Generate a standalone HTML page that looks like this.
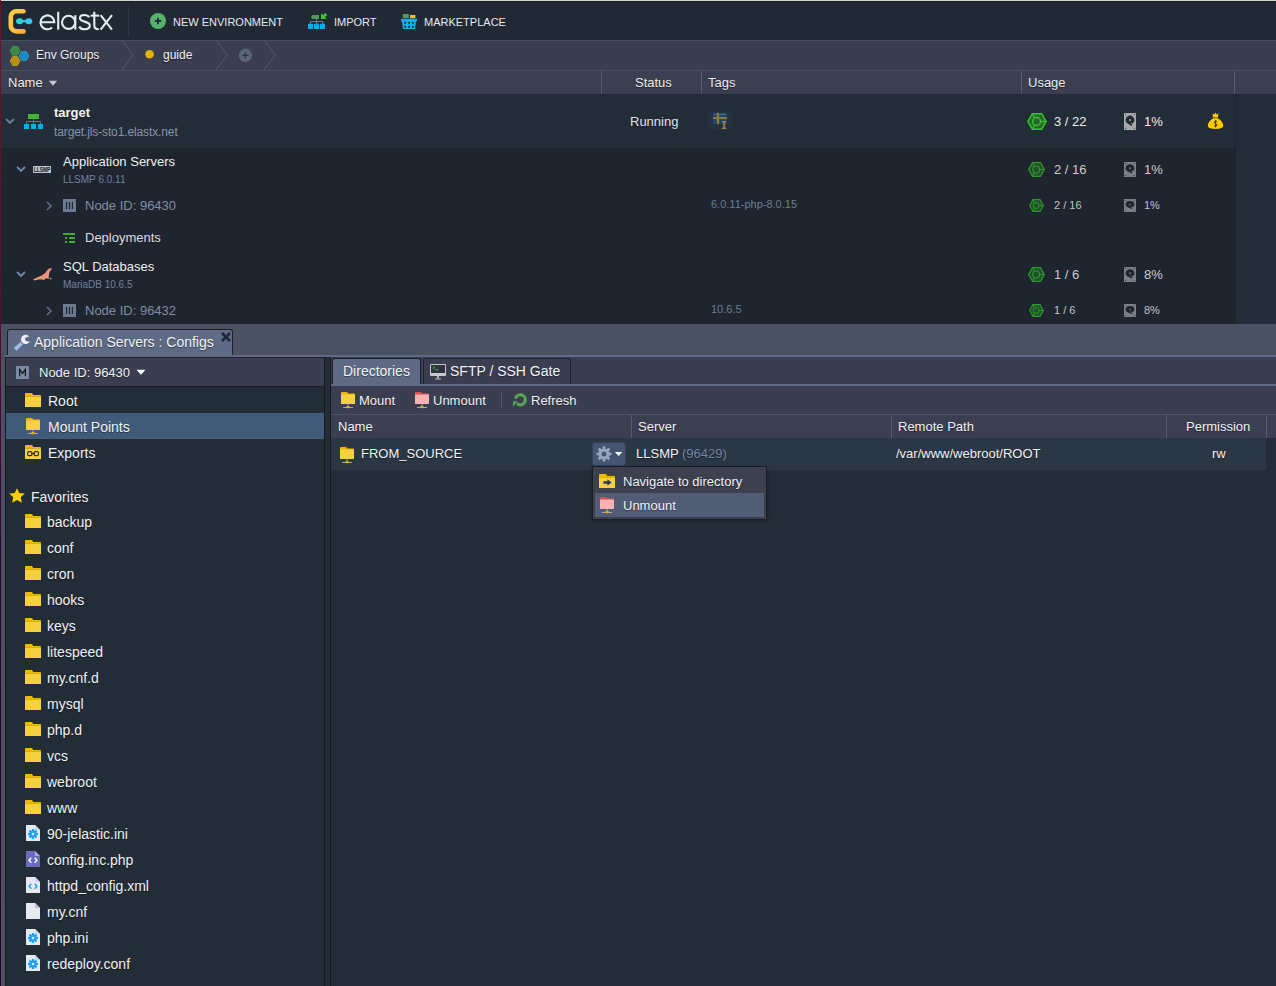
<!DOCTYPE html>
<html><head><meta charset="utf-8">
<style>
*{box-sizing:border-box;margin:0;padding:0}
html,body{width:1276px;height:986px;overflow:hidden;background:#232c37;font-family:"Liberation Sans",sans-serif;color:#e6e8ec}
.a{position:absolute}
.t{position:absolute;white-space:nowrap;line-height:1}
svg{position:absolute;overflow:visible}
</style></head><body>
<!-- window edges -->
<div class="a" style="left:0;top:0;width:1276px;height:1px;background:#d9d7d5;z-index:10"></div>
<div class="a" style="left:0;top:0;width:1px;height:986px;background:linear-gradient(#6b1525 0%,#5a1030 30%,#3a0035 50%,#1e0018 100%);z-index:10"></div>

<!-- top bar -->
<div class="a" style="left:0;top:1px;width:1276px;height:39px;background:#202934"></div>
<div class="a" style="left:0;top:1px;width:1276px;height:1px;background:#18202a"></div>


<!-- logo -->
<svg style="left:0;top:0" width="130" height="40">
 <defs><linearGradient id="lg" x1="0" y1="0" x2="1" y2="1"><stop offset="0" stop-color="#ffcf3a"/><stop offset="0.5" stop-color="#ffc04a"/><stop offset="1" stop-color="#f9b233"/></linearGradient></defs>
 <path d="M23.5 11.3 H16.5 A5.7 5.7 0 0 0 10.8 17 V25.7 A5.7 5.7 0 0 0 16.5 31.4 H23.5" fill="none" stroke="url(#lg)" stroke-width="4.6" stroke-linecap="round"/>
 <ellipse cx="19.6" cy="21.2" rx="3.5" ry="3" fill="#2fd4d2"/>
 <ellipse cx="28.8" cy="21.2" rx="3.5" ry="3" fill="#3ac6ee"/>
 <rect x="19.5" y="20.1" width="9" height="2.2" fill="#34cde0"/>
 <g fill="none" stroke="#e4ecf3" stroke-width="2.1">
  <path d="M40.5 22.3 H54.3 A6.9 6.9 0 1 0 52.1 27.4"/>
  <path d="M58.2 11.8 V29.6"/>
  <circle cx="68.6" cy="22.3" r="6.6"/>
  <path d="M75.3 15.2 V29.6"/>
  <path d="M89.2 17.2 C88 15.3 85.8 15 84.3 15 C81.5 15 79.9 16.4 79.9 18.3 C79.9 22.6 89.8 20.6 89.8 25.6 C89.8 27.9 87.8 29.3 84.6 29.3 C82.2 29.3 80.2 28.3 79.2 26.6"/>
  <path d="M94.3 11.8 V25.5 C94.3 28.3 95.5 29.3 98.8 29.3"/>
  <path d="M90.6 15.6 H99.2"/>
  <path d="M100.6 15.2 L112 29.6 M112 15.2 L100.6 29.6"/>
 </g>
</svg>
<div class="a" style="left:128px;top:6px;width:1px;height:30px;background:#2e3743"></div>

<!-- new env -->
<svg style="left:150px;top:13px" width="16" height="16"><circle cx="8" cy="8" r="8" fill="#58b26a"/><path d="M8 4.8V11.2M4.8 8H11.2" stroke="#243040" stroke-width="1.9"/></svg>
<div class="t" style="left:173px;top:17px;font-size:11px;color:#e8eaed">NEW ENVIRONMENT</div>

<!-- import -->
<svg style="left:300px;top:8px" width="40" height="26">
 <path d="M12.3 7 H19 V11 H12.3 L11 9 Z" fill="#4f9a5c"/>
 <path d="M21 5 L21 11 L27 11 L25 9.3 L27.2 7 L25.3 4.8 L23 7.2 Z" fill="#3cc43a"/>
 <path d="M16.5 11 V16 M10.5 16 V13.5 H22.7 V16" fill="none" stroke="#6f7382" stroke-width="1.2"/>
 <rect x="8" y="15.8" width="5" height="5.2" fill="#00aeef"/>
 <rect x="14" y="15.8" width="5" height="5.2" fill="#00aeef"/>
 <rect x="20" y="15.8" width="5" height="5.2" fill="#00aeef"/>
</svg>
<div class="t" style="left:334px;top:17px;font-size:11px;color:#e8eaed">IMPORT</div>

<!-- marketplace -->
<svg style="left:393px;top:8px" width="40" height="26">
 <rect x="9.7" y="6" width="6.1" height="4" fill="#4f9a5c"/>
 <rect x="17" y="7" width="5.4" height="3.2" fill="#f5c518"/>
 <path d="M8 10.8 H24 V13.5 H23 L22 21 H10 L9 13.5 H8 Z" fill="#00b4f0"/>
 <g fill="#1e2833"><rect x="11.3" y="13.9" width="1.8" height="1.8"/><rect x="15.1" y="13.9" width="1.8" height="1.8"/><rect x="18.9" y="13.9" width="1.8" height="1.8"/><rect x="11.3" y="17.9" width="1.8" height="1.8"/><rect x="15.1" y="17.9" width="1.8" height="1.8"/><rect x="18.9" y="17.9" width="1.8" height="1.8"/></g>
</svg>
<div class="t" style="left:424px;top:17px;font-size:11px;color:#e8eaed">MARKETPLACE</div>

<!-- breadcrumb bar -->
<div class="a" style="left:0;top:40px;width:1276px;height:31px;background:#3b3e50;border-top:1px solid #4b4e60;border-bottom:1px solid #4b4e60"></div>

<!-- grid header -->
<div class="a" style="left:0;top:71px;width:1276px;height:23px;background:#3c3f51"></div>


<!-- breadcrumb content -->
<svg style="left:0;top:40px" width="300" height="31">
 <path d="M12.7 6.4 H17.5 L20 10.8 L17.5 15.2 H12.7 L10.2 10.8 Z" fill="#3a8a45" stroke="#46a852" stroke-width="0.7"/>
 <path d="M21.6 11.6 H26.4 L28.9 16 L26.4 20.4 H21.6 L19.1 16 Z" fill="#1b8bbd" stroke="#2aa6dc" stroke-width="0.7"/>
 <path d="M12.7 16.6 H17.5 L20 21 L17.5 25.4 H12.7 L10.2 21 Z" fill="#b38f10" stroke="#dcae1c" stroke-width="0.7"/>
 <path d="M122 0 L133 15 L122 30" fill="none" stroke="#55586b" stroke-width="1"/>
 <circle cx="149.6" cy="14.3" r="4.3" fill="#e2b400"/>
 <path d="M216 0 L227.2 15 L216 30" fill="none" stroke="#55586b" stroke-width="1"/>
 <circle cx="245.4" cy="15.4" r="6.6" fill="#5c6578"/>
 <path d="M245.4 12.3 V18.5 M242.3 15.4 H248.5" stroke="#2b313d" stroke-width="1.1"/>
 <path d="M264 0 L275.2 15 L264 30" fill="none" stroke="#55586b" stroke-width="1"/>
</svg>
<div class="t" style="left:36px;top:49px;font-size:12px;color:#f2f2f2;text-shadow:0 1px 1px rgba(0,0,0,.6)">Env Groups</div>
<div class="t" style="left:163px;top:49px;font-size:12px;color:#f2f2f2;text-shadow:0 1px 1px rgba(0,0,0,.6)">guide</div>

<!-- header content -->
<div class="t" style="left:8px;top:76px;font-size:13px;color:#ececee;text-shadow:0 1px 1px rgba(0,0,0,.5)">Name</div>
<svg style="left:48px;top:80px" width="10" height="6"><path d="M0.8 0.8 H9.2 L5 5.8 Z" fill="#c8c8cc"/></svg>
<div class="a" style="left:601px;top:71px;width:1px;height:23px;background:#565a6b"></div>
<div class="t" style="left:635px;top:76px;font-size:13px;color:#ececee;text-shadow:0 1px 1px rgba(0,0,0,.5)">Status</div>
<div class="a" style="left:701px;top:71px;width:1px;height:23px;background:#565a6b"></div>
<div class="t" style="left:708px;top:76px;font-size:13px;color:#ececee;text-shadow:0 1px 1px rgba(0,0,0,.5)">Tags</div>
<div class="a" style="left:1021px;top:71px;width:1px;height:23px;background:#565a6b"></div>
<div class="t" style="left:1028px;top:76px;font-size:13px;color:#ececee;text-shadow:0 1px 1px rgba(0,0,0,.5)">Usage</div>
<div class="a" style="left:1234px;top:71px;width:1px;height:23px;background:#565a6b"></div>

<!-- grid rows -->
<div class="a" style="left:0;top:94px;width:1235px;height:54px;background:#232d38"></div>
<div class="a" style="left:0;top:148px;width:1235px;height:176px;background:#1f252e"></div>
<div class="a" style="left:1236px;top:94px;width:40px;height:230px;background:#232c38"></div>

<!-- grid content -->
<svg style="left:5px;top:118px" width="10" height="7"><path d="M1 1 L5 5 L9 1" fill="none" stroke="#6d7f98" stroke-width="1.9"/></svg>
<svg style="left:23px;top:113px" width="22" height="18"><rect x="5" y="1" width="11" height="5" fill="#44b33a"/><path d="M10.5 6 V11 M3.5 11 V8.5 H17.5 V11" fill="none" stroke="#6c707c" stroke-width="1"/><rect x="1" y="11" width="5" height="5" fill="#00aeef"/><rect x="8" y="11" width="5" height="5" fill="#00aeef"/><rect x="15" y="11" width="5" height="5" fill="#00aeef"/></svg>
<div class="t" style="left:54px;top:106.0px;font-size:13px;color:#f4f4f4;font-weight:bold;text-shadow:0 1px 1px rgba(0,0,0,.4)">target</div>
<div class="t" style="left:54px;top:125.8px;font-size:12px;color:#8794a9;letter-spacing:-0.12px">target.jls-sto1.elastx.net</div>
<div class="t" style="left:630px;top:115.0px;font-size:13px;color:#e4e4e4;text-shadow:0 1px 1px rgba(0,0,0,.4)">Running</div>
<div class="a" style="left:708px;top:112px;width:24px;height:18px;background:#28313e;border-radius:2px"></div>
<svg style="left:708px;top:112px" width="24" height="18"><rect x="4.9" y="0.8" width="14.2" height="11.2" fill="#1e4574"/><rect x="6" y="2" width="12" height="1" fill="#50698a"/><rect x="8.9" y="0.8" width="2.2" height="11.2" fill="#8f7f32"/><rect x="4.9" y="5.1" width="14.2" height="1.8" fill="#8f7f32"/><path d="M14 9 H18 V10.2 H17.2 V15.8 H18 V17 H14 V15.8 H15.3 V10.2 H14 Z" fill="#9a8a38"/></svg>
<svg style="left:1027px;top:113px" width="20" height="17" viewBox="0 0 20 17" preserveAspectRatio="none"><path d="M5.3 0.8 H14.7 L19.2 8.5 L14.7 16.2 H5.3 L0.8 8.5 Z" fill="#2a6530" stroke="#33c42e" stroke-width="1.4"/><circle cx="9.6" cy="8.5" r="4" fill="none" stroke="#33c42e" stroke-width="1.3"/><path d="M13.6 8.5 H19 M7.6 5 L5.4 1 M7.6 12 L5.4 16" stroke="#33c42e" stroke-width="1.3"/></svg>
<div class="t" style="left:1054px;top:115.0px;font-size:13px;color:#eeeeee;">3 / 22</div>
<svg style="left:1124px;top:113px" width="12" height="17" viewBox="0 0 12 17" preserveAspectRatio="none"><rect x="0" y="0" width="12" height="17" fill="#a9a9a9"/><circle cx="6" cy="7" r="4.4" fill="#222b36"/><circle cx="6" cy="7" r="0.95" fill="#a9a9a9"/><path d="M4.6 10.2 L7.6 12.2" stroke="#222b36" stroke-width="1.5" stroke-linecap="round"/><path d="M6.6 9.6 L8.2 11" stroke="#a9a9a9" stroke-width="0.6"/><g fill="#222b36" opacity="0.8"><circle cx="1.6" cy="1.6" r="0.6"/><circle cx="10.4" cy="1.6" r="0.6"/><circle cx="1.6" cy="15.4" r="0.6"/><circle cx="10.4" cy="15.4" r="0.6"/></g></svg>
<div class="t" style="left:1144px;top:115.0px;font-size:13px;color:#eeeeee;">1%</div>
<svg style="left:1207px;top:111px" width="18" height="19"><path d="M5.6 2.6 L7.4 3.6 L8.5 1.4 L9.6 3.6 L11.4 2.6 L11.1 6.6 H5.9 Z" fill="#ffcc00"/><path d="M6.4 7.3 H10.6 C14.2 9 16.2 12.2 16.2 14.6 C16.2 17 13.5 18 8.5 18 C3.5 18 0.8 17 0.8 14.6 C0.8 12.2 2.8 9 6.4 7.3 Z" fill="#ffcc00"/><path d="M10.2 10.6 C9.6 9.9 7.2 9.9 7.2 11.3 C7.2 12.8 10.1 12.4 10.1 14.1 C10.1 15.5 7.6 15.6 6.9 14.7 M8.6 9.2 V16.4" fill="none" stroke="#2b2a1c" stroke-width="0.95"/></svg>
<div class="a" style="left:0;top:188px;width:1235px;height:1px;background:#1c2128"></div>
<div class="a" style="left:0;top:221px;width:1235px;height:1px;background:#1c2128"></div>
<div class="a" style="left:0;top:253px;width:1235px;height:1px;background:#1c2128"></div>
<div class="a" style="left:0;top:293px;width:1235px;height:1px;background:#1c2128"></div>
<svg style="left:16px;top:166px" width="10" height="7"><path d="M1 1 L5 5 L9 1" fill="none" stroke="#7088a8" stroke-width="1.9"/></svg>
<svg style="left:33px;top:166px" width="19" height="8"><rect width="18" height="7" fill="#bfc3cb"/><text x="9" y="6.3" font-size="7.5" font-weight="bold" text-anchor="middle" fill="#14171c" font-family="Liberation Sans" textLength="16.5" lengthAdjust="spacingAndGlyphs">LLSMP</text></svg>
<div class="t" style="left:63px;top:155.0px;font-size:13px;color:#f0f0f0;">Application Servers</div>
<div class="t" style="left:63px;top:174.5px;font-size:10px;color:#6f82a0;">LLSMP 6.0.11</div>
<svg style="left:1028px;top:162px" width="17" height="15" viewBox="0 0 20 17" preserveAspectRatio="none"><path d="M5.3 0.8 H14.7 L19.2 8.5 L14.7 16.2 H5.3 L0.8 8.5 Z" fill="#244f2c" stroke="#2a9a2a" stroke-width="1.4"/><circle cx="9.6" cy="8.5" r="4" fill="none" stroke="#2a9a2a" stroke-width="1.3"/><path d="M13.6 8.5 H19 M7.6 5 L5.4 1 M7.6 12 L5.4 16" stroke="#2a9a2a" stroke-width="1.3"/></svg>
<div class="t" style="left:1054px;top:163.0px;font-size:13px;color:#cccccc;">2 / 16</div>
<svg style="left:1124px;top:162px" width="12" height="15" viewBox="0 0 12 17" preserveAspectRatio="none"><rect x="0" y="0" width="12" height="17" fill="#7c7f85"/><circle cx="6" cy="7" r="4.4" fill="#1f252e"/><circle cx="6" cy="7" r="0.95" fill="#7c7f85"/><path d="M4.6 10.2 L7.6 12.2" stroke="#1f252e" stroke-width="1.5" stroke-linecap="round"/><path d="M6.6 9.6 L8.2 11" stroke="#7c7f85" stroke-width="0.6"/><g fill="#1f252e" opacity="0.8"><circle cx="1.6" cy="1.6" r="0.6"/><circle cx="10.4" cy="1.6" r="0.6"/><circle cx="1.6" cy="15.4" r="0.6"/><circle cx="10.4" cy="15.4" r="0.6"/></g></svg>
<div class="t" style="left:1144px;top:163.0px;font-size:13px;color:#cccccc;">1%</div>
<svg style="left:46px;top:201px" width="7" height="10"><path d="M1 1 L5 5 L1 9" fill="none" stroke="#5f6f85" stroke-width="1.7"/></svg>
<svg style="left:63px;top:199px" width="13" height="13"><rect width="13" height="13" fill="#6c7a90"/><path d="M3.6 3 V10 M6.5 3 V10 M9.4 3 V10" stroke="#1f252e" stroke-width="1.2"/></svg>
<div class="t" style="left:85px;top:199.0px;font-size:13px;color:#7f8da4;">Node ID: 96430</div>
<div class="t" style="left:711px;top:198.7px;font-size:11px;color:#6a7d96;">6.0.11-php-8.0.15</div>
<svg style="left:1029px;top:199px" width="15" height="13" viewBox="0 0 20 17" preserveAspectRatio="none"><path d="M5.3 0.8 H14.7 L19.2 8.5 L14.7 16.2 H5.3 L0.8 8.5 Z" fill="#244f2c" stroke="#2a9a2a" stroke-width="1.4"/><circle cx="9.6" cy="8.5" r="4" fill="none" stroke="#2a9a2a" stroke-width="1.3"/><path d="M13.6 8.5 H19 M7.6 5 L5.4 1 M7.6 12 L5.4 16" stroke="#2a9a2a" stroke-width="1.3"/></svg>
<div class="t" style="left:1054px;top:199.7px;font-size:11px;color:#c4c4c4;">2 / 16</div>
<svg style="left:1124px;top:199px" width="12" height="13" viewBox="0 0 12 17" preserveAspectRatio="none"><rect x="0" y="0" width="12" height="17" fill="#7c7f85"/><circle cx="6" cy="7" r="4.4" fill="#1f252e"/><circle cx="6" cy="7" r="0.95" fill="#7c7f85"/><path d="M4.6 10.2 L7.6 12.2" stroke="#1f252e" stroke-width="1.5" stroke-linecap="round"/><path d="M6.6 9.6 L8.2 11" stroke="#7c7f85" stroke-width="0.6"/><g fill="#1f252e" opacity="0.8"><circle cx="1.6" cy="1.6" r="0.6"/><circle cx="10.4" cy="1.6" r="0.6"/><circle cx="1.6" cy="15.4" r="0.6"/><circle cx="10.4" cy="15.4" r="0.6"/></g></svg>
<div class="t" style="left:1144px;top:199.7px;font-size:11px;color:#c4c4c4;">1%</div>
<svg style="left:63px;top:232px" width="13" height="12"><rect x="0" y="1" width="12" height="2" fill="#3fae2a"/><rect x="2" y="5" width="2" height="2" fill="#3fae2a"/><rect x="6" y="5" width="6" height="2" fill="#3fae2a"/><rect x="2" y="9" width="2" height="2" fill="#3fae2a"/><rect x="6" y="9" width="6" height="2" fill="#3fae2a"/></svg>
<div class="t" style="left:85px;top:231.0px;font-size:13px;color:#dddddd;">Deployments</div>
<svg style="left:16px;top:271px" width="10" height="7"><path d="M1 1 L5 5 L9 1" fill="none" stroke="#7088a8" stroke-width="1.9"/></svg>
<svg style="left:32px;top:267px" width="21" height="15"><path d="M1.1 12.2 C2.5 11.6 4 10.8 6 10 C8.5 9 10.8 8.2 12.6 6.6 C14 5.3 15 3.2 16.4 2.1 C17.4 1.3 18.6 1.2 19.9 1.6 L19.3 2.9 C18.3 3.6 17.6 4.6 17.3 6 C17 7.6 16.8 9.4 16.7 10.6 L17.4 11.6 L15.6 11.8 L14.7 10.9 C13.8 11.6 13.2 12 12.6 12.2 L12 13.6 L11 12.5 C9 12.4 6.5 12.5 4.5 13 C3 13.5 1.8 13.6 1.1 12.2 Z" fill="#e8967a"/><circle cx="18.6" cy="11.6" r="0.9" fill="#e8967a"/></svg>
<div class="t" style="left:63px;top:260.0px;font-size:13px;color:#f0f0f0;">SQL Databases</div>
<div class="t" style="left:63px;top:279.5px;font-size:10px;color:#6f82a0;">MariaDB 10.6.5</div>
<svg style="left:1028px;top:267px" width="17" height="15" viewBox="0 0 20 17" preserveAspectRatio="none"><path d="M5.3 0.8 H14.7 L19.2 8.5 L14.7 16.2 H5.3 L0.8 8.5 Z" fill="#244f2c" stroke="#2a9a2a" stroke-width="1.4"/><circle cx="9.6" cy="8.5" r="4" fill="none" stroke="#2a9a2a" stroke-width="1.3"/><path d="M13.6 8.5 H19 M7.6 5 L5.4 1 M7.6 12 L5.4 16" stroke="#2a9a2a" stroke-width="1.3"/></svg>
<div class="t" style="left:1054px;top:268.0px;font-size:13px;color:#cccccc;">1 / 6</div>
<svg style="left:1124px;top:267px" width="12" height="15" viewBox="0 0 12 17" preserveAspectRatio="none"><rect x="0" y="0" width="12" height="17" fill="#7c7f85"/><circle cx="6" cy="7" r="4.4" fill="#1f252e"/><circle cx="6" cy="7" r="0.95" fill="#7c7f85"/><path d="M4.6 10.2 L7.6 12.2" stroke="#1f252e" stroke-width="1.5" stroke-linecap="round"/><path d="M6.6 9.6 L8.2 11" stroke="#7c7f85" stroke-width="0.6"/><g fill="#1f252e" opacity="0.8"><circle cx="1.6" cy="1.6" r="0.6"/><circle cx="10.4" cy="1.6" r="0.6"/><circle cx="1.6" cy="15.4" r="0.6"/><circle cx="10.4" cy="15.4" r="0.6"/></g></svg>
<div class="t" style="left:1144px;top:268.0px;font-size:13px;color:#cccccc;">8%</div>
<svg style="left:46px;top:306px" width="7" height="10"><path d="M1 1 L5 5 L1 9" fill="none" stroke="#5f6f85" stroke-width="1.7"/></svg>
<svg style="left:63px;top:304px" width="13" height="13"><rect width="13" height="13" fill="#6c7a90"/><path d="M3.6 3 V10 M6.5 3 V10 M9.4 3 V10" stroke="#1f252e" stroke-width="1.2"/></svg>
<div class="t" style="left:85px;top:304.0px;font-size:13px;color:#7f8da4;">Node ID: 96432</div>
<div class="t" style="left:711px;top:303.7px;font-size:11px;color:#6a7d96;">10.6.5</div>
<svg style="left:1029px;top:304px" width="15" height="13" viewBox="0 0 20 17" preserveAspectRatio="none"><path d="M5.3 0.8 H14.7 L19.2 8.5 L14.7 16.2 H5.3 L0.8 8.5 Z" fill="#244f2c" stroke="#2a9a2a" stroke-width="1.4"/><circle cx="9.6" cy="8.5" r="4" fill="none" stroke="#2a9a2a" stroke-width="1.3"/><path d="M13.6 8.5 H19 M7.6 5 L5.4 1 M7.6 12 L5.4 16" stroke="#2a9a2a" stroke-width="1.3"/></svg>
<div class="t" style="left:1054px;top:304.7px;font-size:11px;color:#c4c4c4;">1 / 6</div>
<svg style="left:1124px;top:304px" width="12" height="13" viewBox="0 0 12 17" preserveAspectRatio="none"><rect x="0" y="0" width="12" height="17" fill="#7c7f85"/><circle cx="6" cy="7" r="4.4" fill="#1f252e"/><circle cx="6" cy="7" r="0.95" fill="#7c7f85"/><path d="M4.6 10.2 L7.6 12.2" stroke="#1f252e" stroke-width="1.5" stroke-linecap="round"/><path d="M6.6 9.6 L8.2 11" stroke="#7c7f85" stroke-width="0.6"/><g fill="#1f252e" opacity="0.8"><circle cx="1.6" cy="1.6" r="0.6"/><circle cx="10.4" cy="1.6" r="0.6"/><circle cx="1.6" cy="15.4" r="0.6"/><circle cx="10.4" cy="15.4" r="0.6"/></g></svg>
<div class="t" style="left:1144px;top:304.7px;font-size:11px;color:#c4c4c4;">8%</div>
<div class="a" style="left:1235px;top:94px;width:1px;height:230px;background:#1c232b"></div>

<!-- bottom panel -->
<div class="a" style="left:0;top:324px;width:1276px;height:662px;background:#4a5163"></div>

<div class="a" style="left:1px;top:324px;width:4px;height:662px;background:#4a5163"></div>
<div class="a" style="left:7px;top:329px;width:226px;height:28px;background:#5f6b84;border:1px solid #1c1f26;border-bottom:none;border-radius:3px 3px 0 0"></div>
<div class="a" style="left:5px;top:355px;width:1271px;height:2px;background:#5f6b84"></div>
<svg style="left:10px;top:330px" width="24" height="24"><path d="M5.2 19.4 L11.6 13.3" stroke="#9dbde9" stroke-width="3.6"/><circle cx="15.6" cy="9.4" r="4.6" fill="#eeeeee"/><circle cx="16.9" cy="9.1" r="1.9" fill="#56627a"/><path d="M16.9 7.2 L21 6.4 L21 11.6 L16.9 11" fill="#5f6b84"/><path d="M16.9 7.2 L19.5 6.9 M16.9 11 L19.5 11.3" stroke="#56627a" stroke-width="0.6"/></svg>
<div class="t" style="left:34px;top:335.1px;font-size:14px;color:#f2f4f8;text-shadow:0 1px 1px rgba(0,0,0,.45)">Application Servers : Configs</div>
<svg style="left:221px;top:332px" width="10" height="10"><path d="M1 1 L9 9 M9 1 L1 9" stroke="#1c2838" stroke-width="2.6"/></svg>
<div class="a" style="left:5px;top:357px;width:320px;height:629px;background:#232d37;border-left:1px solid #18191c;border-right:1px solid #18191c;border-top:1px solid #20232b"></div>
<div class="a" style="left:6px;top:358px;width:318px;height:28px;background:#3b3e50"></div>
<div class="a" style="left:6px;top:386px;width:318px;height:1px;background:#1a1c22"></div>
<svg style="left:16px;top:366px" width="13" height="13"><rect width="13" height="13" fill="#7a8ba6"/><path d="M3.6 10.2 V3.4 L6.5 7.4 L9.4 3.4 V10.2" fill="none" stroke="#12161c" stroke-width="1.2"/></svg>
<div class="t" style="left:39px;top:366.0px;font-size:13px;color:#f2f2f2;text-shadow:0 1px 1px rgba(0,0,0,.45)">Node ID: 96430</div>
<svg style="left:136px;top:369px" width="10" height="7"><path d="M0.5 0.7 H9.5 L5 5.8 Z" fill="#ffffff"/></svg>
<div class="a" style="left:6px;top:413px;width:318px;height:26px;background:#405b7a"></div>
<svg style="left:25px;top:393px" width="16" height="15"><path d="M0 0.8 Q0 0 0.8 0 H7 L8.3 2 H15.2 Q16 2 16 2.8 V3.8 H0 Z" fill="#f2b705"/><rect x="0" y="3.6" width="16" height="10.4" fill="#f5d142"/><rect x="0" y="3.4" width="16" height="0.5" fill="#d9a91a"/></svg>
<div class="t" style="left:48px;top:394.1px;font-size:14px;color:#f0f2f5;text-shadow:0 1px 1px rgba(0,0,0,.45)">Root</div>
<svg style="left:26px;top:418px" width="15" height="17"><path d="M0 1 Q0 0 1 0 H6 L7.5 1.6 H13 Q14 1.6 14 2.6 V4 H0 Z" fill="#f0b400"/><rect x="0" y="2.6" width="14" height="9.4" rx="0.5" fill="#f5d142"/><rect x="6.5" y="12" width="1" height="2.6" fill="#a3a7b0"/><rect x="2" y="15" width="10" height="1" fill="#a3a7b0"/><ellipse cx="7" cy="15.1" rx="1.9" ry="1.2" fill="#f0b400"/></svg>
<div class="t" style="left:48px;top:420.1px;font-size:14px;color:#f0f2f5;text-shadow:0 1px 1px rgba(0,0,0,.45)">Mount Points</div>
<svg style="left:25px;top:445px" width="16" height="15"><path d="M0 0.8 Q0 0 0.8 0 H7 L8.3 2 H15.2 Q16 2 16 2.8 V3.8 H0 Z" fill="#f2b705"/><rect x="0" y="3.6" width="16" height="10.4" fill="#f5d142"/><rect x="0" y="3.4" width="16" height="0.5" fill="#d9a91a"/><rect x="2.6" y="6.6" width="4.4" height="4" rx="1.3" fill="none" stroke="#2c2c26" stroke-width="1.1"/><rect x="9.1" y="6.6" width="4.4" height="4" rx="1.3" fill="none" stroke="#2c2c26" stroke-width="1.1"/><rect x="6" y="8.1" width="4" height="1.1" fill="#2c2c26"/></svg>
<div class="t" style="left:48px;top:446.1px;font-size:14px;color:#f0f2f5;text-shadow:0 1px 1px rgba(0,0,0,.45)">Exports</div>
<svg style="left:9px;top:488px" width="16" height="16"><path d="M8 0.2 L10.3 5.1 L15.8 5.5 L11.7 9.2 L12.9 14.8 L8 12 L3.1 14.8 L4.3 9.2 L0.2 5.5 L5.7 5.1 Z" fill="#ffcc00"/></svg>
<div class="t" style="left:31px;top:490.1px;font-size:14px;color:#f0f2f5;text-shadow:0 1px 1px rgba(0,0,0,.45)">Favorites</div>
<svg style="left:25px;top:514px" width="16" height="15"><path d="M0 0.8 Q0 0 0.8 0 H7 L8.3 2 H15.2 Q16 2 16 2.8 V3.8 H0 Z" fill="#f2b705"/><rect x="0" y="3.6" width="16" height="10.4" fill="#f5d142"/><rect x="0" y="3.4" width="16" height="0.5" fill="#d9a91a"/></svg>
<div class="t" style="left:47px;top:515.1px;font-size:14px;color:#f0f2f5;text-shadow:0 1px 1px rgba(0,0,0,.45)">backup</div>
<svg style="left:25px;top:540px" width="16" height="15"><path d="M0 0.8 Q0 0 0.8 0 H7 L8.3 2 H15.2 Q16 2 16 2.8 V3.8 H0 Z" fill="#f2b705"/><rect x="0" y="3.6" width="16" height="10.4" fill="#f5d142"/><rect x="0" y="3.4" width="16" height="0.5" fill="#d9a91a"/></svg>
<div class="t" style="left:47px;top:541.1px;font-size:14px;color:#f0f2f5;text-shadow:0 1px 1px rgba(0,0,0,.45)">conf</div>
<svg style="left:25px;top:566px" width="16" height="15"><path d="M0 0.8 Q0 0 0.8 0 H7 L8.3 2 H15.2 Q16 2 16 2.8 V3.8 H0 Z" fill="#f2b705"/><rect x="0" y="3.6" width="16" height="10.4" fill="#f5d142"/><rect x="0" y="3.4" width="16" height="0.5" fill="#d9a91a"/></svg>
<div class="t" style="left:47px;top:567.1px;font-size:14px;color:#f0f2f5;text-shadow:0 1px 1px rgba(0,0,0,.45)">cron</div>
<svg style="left:25px;top:592px" width="16" height="15"><path d="M0 0.8 Q0 0 0.8 0 H7 L8.3 2 H15.2 Q16 2 16 2.8 V3.8 H0 Z" fill="#f2b705"/><rect x="0" y="3.6" width="16" height="10.4" fill="#f5d142"/><rect x="0" y="3.4" width="16" height="0.5" fill="#d9a91a"/></svg>
<div class="t" style="left:47px;top:593.1px;font-size:14px;color:#f0f2f5;text-shadow:0 1px 1px rgba(0,0,0,.45)">hooks</div>
<svg style="left:25px;top:618px" width="16" height="15"><path d="M0 0.8 Q0 0 0.8 0 H7 L8.3 2 H15.2 Q16 2 16 2.8 V3.8 H0 Z" fill="#f2b705"/><rect x="0" y="3.6" width="16" height="10.4" fill="#f5d142"/><rect x="0" y="3.4" width="16" height="0.5" fill="#d9a91a"/></svg>
<div class="t" style="left:47px;top:619.1px;font-size:14px;color:#f0f2f5;text-shadow:0 1px 1px rgba(0,0,0,.45)">keys</div>
<svg style="left:25px;top:644px" width="16" height="15"><path d="M0 0.8 Q0 0 0.8 0 H7 L8.3 2 H15.2 Q16 2 16 2.8 V3.8 H0 Z" fill="#f2b705"/><rect x="0" y="3.6" width="16" height="10.4" fill="#f5d142"/><rect x="0" y="3.4" width="16" height="0.5" fill="#d9a91a"/></svg>
<div class="t" style="left:47px;top:645.1px;font-size:14px;color:#f0f2f5;text-shadow:0 1px 1px rgba(0,0,0,.45)">litespeed</div>
<svg style="left:25px;top:670px" width="16" height="15"><path d="M0 0.8 Q0 0 0.8 0 H7 L8.3 2 H15.2 Q16 2 16 2.8 V3.8 H0 Z" fill="#f2b705"/><rect x="0" y="3.6" width="16" height="10.4" fill="#f5d142"/><rect x="0" y="3.4" width="16" height="0.5" fill="#d9a91a"/></svg>
<div class="t" style="left:47px;top:671.1px;font-size:14px;color:#f0f2f5;text-shadow:0 1px 1px rgba(0,0,0,.45)">my.cnf.d</div>
<svg style="left:25px;top:696px" width="16" height="15"><path d="M0 0.8 Q0 0 0.8 0 H7 L8.3 2 H15.2 Q16 2 16 2.8 V3.8 H0 Z" fill="#f2b705"/><rect x="0" y="3.6" width="16" height="10.4" fill="#f5d142"/><rect x="0" y="3.4" width="16" height="0.5" fill="#d9a91a"/></svg>
<div class="t" style="left:47px;top:697.1px;font-size:14px;color:#f0f2f5;text-shadow:0 1px 1px rgba(0,0,0,.45)">mysql</div>
<svg style="left:25px;top:722px" width="16" height="15"><path d="M0 0.8 Q0 0 0.8 0 H7 L8.3 2 H15.2 Q16 2 16 2.8 V3.8 H0 Z" fill="#f2b705"/><rect x="0" y="3.6" width="16" height="10.4" fill="#f5d142"/><rect x="0" y="3.4" width="16" height="0.5" fill="#d9a91a"/></svg>
<div class="t" style="left:47px;top:723.1px;font-size:14px;color:#f0f2f5;text-shadow:0 1px 1px rgba(0,0,0,.45)">php.d</div>
<svg style="left:25px;top:748px" width="16" height="15"><path d="M0 0.8 Q0 0 0.8 0 H7 L8.3 2 H15.2 Q16 2 16 2.8 V3.8 H0 Z" fill="#f2b705"/><rect x="0" y="3.6" width="16" height="10.4" fill="#f5d142"/><rect x="0" y="3.4" width="16" height="0.5" fill="#d9a91a"/></svg>
<div class="t" style="left:47px;top:749.1px;font-size:14px;color:#f0f2f5;text-shadow:0 1px 1px rgba(0,0,0,.45)">vcs</div>
<svg style="left:25px;top:774px" width="16" height="15"><path d="M0 0.8 Q0 0 0.8 0 H7 L8.3 2 H15.2 Q16 2 16 2.8 V3.8 H0 Z" fill="#f2b705"/><rect x="0" y="3.6" width="16" height="10.4" fill="#f5d142"/><rect x="0" y="3.4" width="16" height="0.5" fill="#d9a91a"/></svg>
<div class="t" style="left:47px;top:775.1px;font-size:14px;color:#f0f2f5;text-shadow:0 1px 1px rgba(0,0,0,.45)">webroot</div>
<svg style="left:25px;top:800px" width="16" height="15"><path d="M0 0.8 Q0 0 0.8 0 H7 L8.3 2 H15.2 Q16 2 16 2.8 V3.8 H0 Z" fill="#f2b705"/><rect x="0" y="3.6" width="16" height="10.4" fill="#f5d142"/><rect x="0" y="3.4" width="16" height="0.5" fill="#d9a91a"/></svg>
<div class="t" style="left:47px;top:801.1px;font-size:14px;color:#f0f2f5;text-shadow:0 1px 1px rgba(0,0,0,.45)">www</div>
<svg style="left:26px;top:825px" width="14" height="16"><path d="M0 0 H9 L14 5 V16 H0 Z" fill="#e6e9ee"/><path d="M9 0 L14 5 H9 Z" fill="#bfdcf5"/><g transform="translate(7,9)"><circle r="3.6" fill="#17a2ff"/><rect x="-1.1" y="-5" width="2.2" height="2.4" fill="#17a2ff" transform="rotate(0)"/><rect x="-1.1" y="-5" width="2.2" height="2.4" fill="#17a2ff" transform="rotate(45)"/><rect x="-1.1" y="-5" width="2.2" height="2.4" fill="#17a2ff" transform="rotate(90)"/><rect x="-1.1" y="-5" width="2.2" height="2.4" fill="#17a2ff" transform="rotate(135)"/><rect x="-1.1" y="-5" width="2.2" height="2.4" fill="#17a2ff" transform="rotate(180)"/><rect x="-1.1" y="-5" width="2.2" height="2.4" fill="#17a2ff" transform="rotate(225)"/><rect x="-1.1" y="-5" width="2.2" height="2.4" fill="#17a2ff" transform="rotate(270)"/><rect x="-1.1" y="-5" width="2.2" height="2.4" fill="#17a2ff" transform="rotate(315)"/><circle r="1.3" fill="#e6e9ee"/></g></svg>
<div class="t" style="left:47px;top:827.1px;font-size:14px;color:#f0f2f5;text-shadow:0 1px 1px rgba(0,0,0,.45)">90-jelastic.ini</div>
<svg style="left:26px;top:851px" width="14" height="16"><path d="M0 0 H9 L14 5 V16 H0 Z" fill="#6b6bbf"/><path d="M9 0 L14 5 H9 Z" fill="#a9a9dc"/><path d="M5.3 6.8 L3 9.3 L5.3 11.8 M8.7 6.8 L11 9.3 L8.7 11.8" fill="none" stroke="#ffffff" stroke-width="1.4"/></svg>
<div class="t" style="left:47px;top:853.1px;font-size:14px;color:#f0f2f5;text-shadow:0 1px 1px rgba(0,0,0,.45)">config.inc.php</div>
<svg style="left:26px;top:877px" width="14" height="16"><path d="M0 0 H9 L14 5 V16 H0 Z" fill="#e6e9ee"/><path d="M9 0 L14 5 H9 Z" fill="#bfdcf5"/><path d="M5.3 6.8 L3 9.3 L5.3 11.8 M8.7 6.8 L11 9.3 L8.7 11.8" fill="none" stroke="#17a2ff" stroke-width="1.4"/></svg>
<div class="t" style="left:47px;top:879.1px;font-size:14px;color:#f0f2f5;text-shadow:0 1px 1px rgba(0,0,0,.45)">httpd_config.xml</div>
<svg style="left:26px;top:903px" width="14" height="16"><path d="M0 0 H9 L14 5 V16 H0 Z" fill="#e6e9ee"/><path d="M9 0 L14 5 H9 Z" fill="#b9bdc9"/></svg>
<div class="t" style="left:47px;top:905.1px;font-size:14px;color:#f0f2f5;text-shadow:0 1px 1px rgba(0,0,0,.45)">my.cnf</div>
<svg style="left:26px;top:929px" width="14" height="16"><path d="M0 0 H9 L14 5 V16 H0 Z" fill="#e6e9ee"/><path d="M9 0 L14 5 H9 Z" fill="#bfdcf5"/><g transform="translate(7,9)"><circle r="3.6" fill="#17a2ff"/><rect x="-1.1" y="-5" width="2.2" height="2.4" fill="#17a2ff" transform="rotate(0)"/><rect x="-1.1" y="-5" width="2.2" height="2.4" fill="#17a2ff" transform="rotate(45)"/><rect x="-1.1" y="-5" width="2.2" height="2.4" fill="#17a2ff" transform="rotate(90)"/><rect x="-1.1" y="-5" width="2.2" height="2.4" fill="#17a2ff" transform="rotate(135)"/><rect x="-1.1" y="-5" width="2.2" height="2.4" fill="#17a2ff" transform="rotate(180)"/><rect x="-1.1" y="-5" width="2.2" height="2.4" fill="#17a2ff" transform="rotate(225)"/><rect x="-1.1" y="-5" width="2.2" height="2.4" fill="#17a2ff" transform="rotate(270)"/><rect x="-1.1" y="-5" width="2.2" height="2.4" fill="#17a2ff" transform="rotate(315)"/><circle r="1.3" fill="#e6e9ee"/></g></svg>
<div class="t" style="left:47px;top:931.1px;font-size:14px;color:#f0f2f5;text-shadow:0 1px 1px rgba(0,0,0,.45)">php.ini</div>
<svg style="left:26px;top:955px" width="14" height="16"><path d="M0 0 H9 L14 5 V16 H0 Z" fill="#e6e9ee"/><path d="M9 0 L14 5 H9 Z" fill="#bfdcf5"/><g transform="translate(7,9)"><circle r="3.6" fill="#17a2ff"/><rect x="-1.1" y="-5" width="2.2" height="2.4" fill="#17a2ff" transform="rotate(0)"/><rect x="-1.1" y="-5" width="2.2" height="2.4" fill="#17a2ff" transform="rotate(45)"/><rect x="-1.1" y="-5" width="2.2" height="2.4" fill="#17a2ff" transform="rotate(90)"/><rect x="-1.1" y="-5" width="2.2" height="2.4" fill="#17a2ff" transform="rotate(135)"/><rect x="-1.1" y="-5" width="2.2" height="2.4" fill="#17a2ff" transform="rotate(180)"/><rect x="-1.1" y="-5" width="2.2" height="2.4" fill="#17a2ff" transform="rotate(225)"/><rect x="-1.1" y="-5" width="2.2" height="2.4" fill="#17a2ff" transform="rotate(270)"/><rect x="-1.1" y="-5" width="2.2" height="2.4" fill="#17a2ff" transform="rotate(315)"/><circle r="1.3" fill="#e6e9ee"/></g></svg>
<div class="t" style="left:47px;top:957.1px;font-size:14px;color:#f0f2f5;text-shadow:0 1px 1px rgba(0,0,0,.45)">redeploy.conf</div>
<div class="a" style="left:325px;top:357px;width:5px;height:629px;background:#232c37"></div>
<div class="a" style="left:330px;top:357px;width:946px;height:629px;background:#232d37;border-left:1px solid #18191c"></div>
<div class="a" style="left:331px;top:357px;width:945px;height:29px;background:#3b3e50"></div>
<div class="a" style="left:332px;top:358px;width:89px;height:27px;background:#5f6b84;border:1px solid #1c1f26;border-bottom:none;border-radius:3px 3px 0 0"></div>
<div class="t" style="left:343px;top:364.1px;font-size:14px;color:#f2f4f8;text-shadow:0 1px 1px rgba(0,0,0,.45)">Directories</div>
<div class="a" style="left:423px;top:358px;width:148px;height:27px;background:#3b3e50;border:1px solid #1f232c;border-bottom:none;border-radius:3px 3px 0 0"></div>
<svg style="left:430px;top:364px" width="17" height="16"><rect x="0" y="0" width="16" height="12" rx="1.2" fill="#c9c9c9"/><rect x="1" y="1" width="14" height="8" fill="#2e3340"/><path d="M3 2.4 L4.7 3.7 L3 5" fill="none" stroke="#4cc04c" stroke-width="1"/><rect x="5.2" y="5.3" width="3" height="1" fill="#4cc04c"/><rect x="7" y="12" width="2" height="2.4" fill="#b5b5b5"/><rect x="5" y="14.4" width="6" height="1.1" fill="#b5b5b5"/></svg>
<div class="t" style="left:450px;top:364.1px;font-size:14px;color:#f2f4f8;text-shadow:0 1px 1px rgba(0,0,0,.45)">SFTP / SSH Gate</div>
<div class="a" style="left:331px;top:384px;width:945px;height:2px;background:#5f6b84"></div>
<div class="a" style="left:331px;top:386px;width:945px;height:28px;background:#3b3e50"></div>
<div class="a" style="left:331px;top:414px;width:945px;height:1px;background:#4e5164"></div>
<svg style="left:341px;top:392px" width="15" height="17"><path d="M0 1 Q0 0 1 0 H6 L7.5 1.6 H13 Q14 1.6 14 2.6 V4 H0 Z" fill="#f0b400"/><rect x="0" y="2.6" width="14" height="9.4" rx="0.5" fill="#f5d142"/><rect x="6.5" y="12" width="1" height="2.6" fill="#a3a7b0"/><rect x="2" y="15" width="10" height="1" fill="#a3a7b0"/><ellipse cx="7" cy="15.1" rx="1.9" ry="1.2" fill="#f0b400"/></svg>
<div class="t" style="left:359px;top:394.0px;font-size:13px;color:#f0f2f5;text-shadow:0 1px 1px rgba(0,0,0,.45)">Mount</div>
<svg style="left:415px;top:392px" width="15" height="17"><path d="M0 1 Q0 0 1 0 H6 L7.5 1.6 H13 Q14 1.6 14 2.6 V4 H0 Z" fill="#d9534f"/><rect x="0" y="2.6" width="14" height="9.4" rx="0.5" fill="#f7b3b3"/><rect x="6.5" y="12" width="1" height="2.6" fill="#a3a7b0"/><rect x="2" y="15" width="10" height="1" fill="#a3a7b0"/><ellipse cx="7" cy="15.1" rx="1.9" ry="1.2" fill="#f0b400"/></svg>
<div class="t" style="left:433px;top:394.0px;font-size:13px;color:#f0f2f5;text-shadow:0 1px 1px rgba(0,0,0,.45)">Unmount</div>
<div class="a" style="left:501px;top:392px;width:1px;height:16px;background:#555869"></div>
<svg style="left:508px;top:388px" width="24" height="24"><path d="M7.9 9.5 A5 5 0 1 1 10.2 16.4" fill="none" stroke="#55a84f" stroke-width="3.1" stroke-linecap="round"/><path d="M5 13.2 H10 L5 18.5 Z" fill="#55a84f"/></svg>
<div class="t" style="left:531px;top:394.0px;font-size:13px;color:#f0f2f5;text-shadow:0 1px 1px rgba(0,0,0,.45)">Refresh</div>
<div class="a" style="left:331px;top:415px;width:945px;height:23px;background:#3c3f51"></div>
<div class="a" style="left:631px;top:415px;width:1px;height:23px;background:#565a6b"></div>
<div class="a" style="left:891px;top:415px;width:1px;height:23px;background:#565a6b"></div>
<div class="a" style="left:1166px;top:415px;width:1px;height:23px;background:#565a6b"></div>
<div class="a" style="left:1266px;top:415px;width:1px;height:23px;background:#565a6b"></div>
<div class="t" style="left:338px;top:420.0px;font-size:13px;color:#f0f2f5;text-shadow:0 1px 1px rgba(0,0,0,.45)">Name</div>
<div class="t" style="left:638px;top:420.0px;font-size:13px;color:#f0f2f5;text-shadow:0 1px 1px rgba(0,0,0,.45)">Server</div>
<div class="t" style="left:898px;top:420.0px;font-size:13px;color:#f0f2f5;text-shadow:0 1px 1px rgba(0,0,0,.45)">Remote Path</div>
<div class="t" style="left:1186px;top:420.0px;font-size:13px;color:#f0f2f5;text-shadow:0 1px 1px rgba(0,0,0,.45)">Permission</div>
<div class="a" style="left:331px;top:438px;width:935px;height:32px;background:#2b3744"></div>
<svg style="left:340px;top:447px" width="15" height="17"><path d="M0 1 Q0 0 1 0 H6 L7.5 1.6 H13 Q14 1.6 14 2.6 V4 H0 Z" fill="#f0b400"/><rect x="0" y="2.6" width="14" height="9.4" rx="0.5" fill="#f5d142"/><rect x="6.5" y="12" width="1" height="2.6" fill="#a3a7b0"/><rect x="2" y="15" width="10" height="1" fill="#a3a7b0"/><ellipse cx="7" cy="15.1" rx="1.9" ry="1.2" fill="#f0b400"/></svg>
<div class="t" style="left:361px;top:447.0px;font-size:13px;color:#f0f2f5;text-shadow:0 1px 1px rgba(0,0,0,.45)">FROM_SOURCE</div>
<div class="a" style="left:592px;top:442px;width:34px;height:24px;background:#435570;border:1px solid #36405a;border-radius:3px"></div>
<svg style="left:595px;top:445px" width="18" height="18"><circle cx="9" cy="9" r="5.6" fill="#98a8c2"/><circle cx="9.00" cy="2.70" r="1.45" fill="#98a8c2"/><circle cx="13.45" cy="4.55" r="1.45" fill="#98a8c2"/><circle cx="15.30" cy="9.00" r="1.45" fill="#98a8c2"/><circle cx="13.45" cy="13.45" r="1.45" fill="#98a8c2"/><circle cx="9.00" cy="15.30" r="1.45" fill="#98a8c2"/><circle cx="4.55" cy="13.45" r="1.45" fill="#98a8c2"/><circle cx="2.70" cy="9.00" r="1.45" fill="#98a8c2"/><circle cx="4.55" cy="4.55" r="1.45" fill="#98a8c2"/><circle cx="9" cy="9" r="2.5" fill="#435570"/></svg>
<svg style="left:614px;top:451px" width="9" height="7"><path d="M1 0.9 H8.2 L4.6 5.1 Z" fill="#ffffff"/></svg>
<div class="t" style="left:636px;top:447.0px;font-size:13px;color:#f0f2f5;text-shadow:0 1px 1px rgba(0,0,0,.45)">LLSMP <span style="color:#7487a4">(96429)</span></div>
<div class="t" style="left:896px;top:447.0px;font-size:13px;color:#f0f2f5;text-shadow:0 1px 1px rgba(0,0,0,.45)">/var/www/webroot/ROOT</div>
<div class="t" style="left:1212px;top:447.0px;font-size:13px;color:#f0f2f5;text-shadow:0 1px 1px rgba(0,0,0,.45)">rw</div>
<div class="a" style="left:592px;top:466px;width:175px;height:54px;background:#3d404f;border:1px solid #1b1e25;box-shadow:0 1px 3px rgba(0,0,0,.3)"></div>
<div class="a" style="left:595px;top:493px;width:169px;height:24px;background:#525c75"></div>
<svg style="left:599px;top:474px" width="16" height="15"><path d="M0 0.8 Q0 0 0.8 0 H7 L8.3 2 H15.2 Q16 2 16 2.8 V3.8 H0 Z" fill="#f2b705"/><rect x="0" y="3.6" width="16" height="10.4" fill="#f5d142"/><rect x="0" y="3.4" width="16" height="0.5" fill="#d9a91a"/><path d="M4.4 7.3 H8.4 V5.2 L12.6 8.5 L8.4 11.8 V9.7 H4.4 Z" fill="#2c3650"/></svg>
<div class="t" style="left:623px;top:475.0px;font-size:13px;color:#f0f2f5;text-shadow:0 1px 1px rgba(0,0,0,.45)">Navigate to directory</div>
<svg style="left:600px;top:497px" width="15" height="17"><path d="M0 1 Q0 0 1 0 H6 L7.5 1.6 H13 Q14 1.6 14 2.6 V4 H0 Z" fill="#d9534f"/><rect x="0" y="2.6" width="14" height="9.4" rx="0.5" fill="#f7b3b3"/><rect x="6.5" y="12" width="1" height="2.6" fill="#a3a7b0"/><rect x="2" y="15" width="10" height="1" fill="#a3a7b0"/><ellipse cx="7" cy="15.1" rx="1.9" ry="1.2" fill="#f0b400"/></svg>
<div class="t" style="left:623px;top:499.0px;font-size:13px;color:#f0f2f5;text-shadow:0 1px 1px rgba(0,0,0,.45)">Unmount</div>
</body></html>
